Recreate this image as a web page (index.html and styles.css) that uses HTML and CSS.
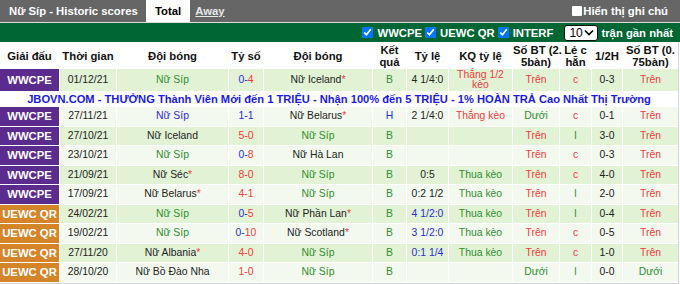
FILE: index.html
```html
<!DOCTYPE html>
<html>
<head>
<meta charset="utf-8">
<link rel="stylesheet" href="styles.css">
</head>
<body>
<div class="wrap">
  <div class="topbar">
    <div class="tabs">
      <span class="title">Nữ Síp - Historic scores</span>
      <span class="tab active">Total</span>
      <span class="tab link">Away</span>
    </div>
    <label class="note"><span class="box"></span>Hiển thị ghi chú</label>
  </div>
  <div class="filter">
    <label class="chk"><input type="checkbox" checked>WWCPE</label>
    <label class="chk"><input type="checkbox" checked>UEWC QR</label>
    <label class="chk"><input type="checkbox" checked>INTERF</label>
    <span class="sel"><span class="sel-val">10</span><svg class="chev" width="10" height="7" viewBox="0 0 10 7"><path d="M1 1.5 L5 5.5 L9 1.5" fill="none" stroke="#000" stroke-width="1.6"/></svg></span>
    <span class="recent">trận gần nhất</span>
  </div>
  <div class="frame">
  <table class="grid">
    <colgroup>
      <col class="w1"><col class="w2"><col class="w3"><col class="w4"><col class="w5"><col class="w6">
      <col class="w7"><col class="w8"><col class="w9"><col class="w10"><col class="w11"><col class="w12">
    </colgroup>
    <thead>
      <tr class="head">
        <th>Giải đấu</th><th>Thời gian</th><th>Đội bóng</th><th>Tỷ số</th><th>Đội bóng</th><th>Kết<br>quả</th>
        <th>Tỷ lệ</th><th>KQ tỷ lệ</th><th>Số BT (2.<br>5bàn)</th><th>Lẻ c<br>hẵn</th><th>1/2H</th><th>Số BT (0.<br>75bàn)</th>
      </tr>
    </thead>
    <tbody>
      <tr class="odd tall">
        <td class="lg purple">WWCPE</td><td>01/12/21</td><td class="g">Nữ Síp</td>
        <td><span class="b">0-</span><span class="r">4</span></td><td>Nữ Iceland<span class="r">*</span></td>
        <td class="g">B</td><td>4 1/4:0</td><td class="r">Thắng 1/2<br>kèo</td><td class="r">Trên</td><td class="r">c</td><td>0-3</td><td class="r">Trên</td>
      </tr>
      <tr class="ad"><td colspan="12">JBOVN.COM - THƯỞNG Thành Viên Mới đến 1 TRIỆU - Nhận 100% đến 5 TRIỆU - 1% HOÀN TRẢ Cao Nhất Thị Trường</td></tr>
      <tr class="even">
        <td class="lg purple">WWCPE</td><td>27/11/21</td><td class="b">Nữ Síp</td>
        <td class="b">1-1</td><td>Nữ Belarus<span class="r">*</span></td>
        <td class="b">H</td><td>2 1/4:0</td><td class="r">Thắng kèo</td><td class="g">Dưới</td><td class="r">c</td><td>0-1</td><td class="r">Trên</td>
      </tr>
      <tr class="odd">
        <td class="lg purple">WWCPE</td><td>27/10/21</td><td>Nữ Iceland</td>
        <td class="r">5-0</td><td class="g">Nữ Síp</td>
        <td class="g">B</td><td></td><td></td><td class="r">Trên</td><td class="g">l</td><td>3-0</td><td class="r">Trên</td>
      </tr>
      <tr class="even">
        <td class="lg purple">WWCPE</td><td>23/10/21</td><td class="g">Nữ Síp</td>
        <td><span class="b">0-</span><span class="r">8</span></td><td>Nữ Hà Lan</td>
        <td class="g">B</td><td></td><td></td><td class="r">Trên</td><td class="r">c</td><td>0-3</td><td class="r">Trên</td>
      </tr>
      <tr class="odd">
        <td class="lg purple">WWCPE</td><td>21/09/21</td><td>Nữ Séc<span class="r">*</span></td>
        <td class="r">8-0</td><td class="g">Nữ Síp</td>
        <td class="g">B</td><td>0:5</td><td class="g">Thua kèo</td><td class="r">Trên</td><td class="r">c</td><td>4-0</td><td class="r">Trên</td>
      </tr>
      <tr class="even">
        <td class="lg purple">WWCPE</td><td>17/09/21</td><td>Nữ Belarus<span class="r">*</span></td>
        <td class="r">4-1</td><td class="g">Nữ Síp</td>
        <td class="g">B</td><td>0:2 1/2</td><td class="g">Thua kèo</td><td class="r">Trên</td><td class="g">l</td><td>2-0</td><td class="r">Trên</td>
      </tr>
      <tr class="odd">
        <td class="lg orange">UEWC QR</td><td>24/02/21</td><td class="g">Nữ Síp</td>
        <td><span class="b">0-</span><span class="r">5</span></td><td>Nữ Phần Lan<span class="r">*</span></td>
        <td class="g">B</td><td class="b">4 1/2:0</td><td class="g">Thua kèo</td><td class="r">Trên</td><td class="g">l</td><td>0-4</td><td class="r">Trên</td>
      </tr>
      <tr class="even">
        <td class="lg orange">UEWC QR</td><td>19/02/21</td><td class="g">Nữ Síp</td>
        <td><span class="b">0-</span><span class="r">10</span></td><td>Nữ Scotland<span class="r">*</span></td>
        <td class="g">B</td><td class="b">3 1/2:0</td><td class="g">Thua kèo</td><td class="r">Trên</td><td class="r">c</td><td>0-5</td><td class="r">Trên</td>
      </tr>
      <tr class="odd">
        <td class="lg orange">UEWC QR</td><td>27/11/20</td><td>Nữ Albania<span class="r">*</span></td>
        <td class="r">4-0</td><td class="g">Nữ Síp</td>
        <td class="g">B</td><td class="b">0:1 1/4</td><td class="g">Thua kèo</td><td class="r">Trên</td><td class="r">c</td><td>1-0</td><td class="r">Trên</td>
      </tr>
      <tr class="even">
        <td class="lg orange">UEWC QR</td><td>28/10/20</td><td>Nữ Bồ Đào Nha</td>
        <td class="r">1-0</td><td class="g">Nữ Síp</td>
        <td class="g">B</td><td></td><td></td><td class="g">Dưới</td><td class="g">l</td><td>0-0</td><td class="g">Dưới</td>
      </tr>
    </tbody>
  </table>
  </div>
</div>
</body>
</html>
```
FILE: styles.css
```css
html, body {
  margin: 0;
  padding: 0;
  background: #fff;
}
.wrap {
  width: 680px;
  font-family: "Liberation Sans", Arial, sans-serif;
  color: #222;
}
.topbar {
  height: 22px;
  background: #666;
  display: flex;
  justify-content: space-between;
  align-items: stretch;
}
.tabs {
  display: flex;
  align-items: stretch;
}
.title {
  color: #fff;
  font-weight: bold;
  font-size: 11.3px;
  padding-left: 9px;
  width: 146px;
  box-sizing: border-box;
  white-space: nowrap;
  display: flex;
  align-items: center;
}
.tab {
  font-weight: bold;
  font-size: 11.3px;
  display: flex;
  align-items: center;
  justify-content: center;
  white-space: nowrap;
}
.tab.active {
  background: #fff;
  color: #000;
  width: 44px;
}
.tab.link {
  color: #e8e8e8;
  text-decoration: underline;
  width: 40px;
}
.note {
  display: flex;
  align-items: center;
  color: #fff;
  font-weight: bold;
  font-size: 11.3px;
  padding-right: 12px;
  white-space: nowrap;
}
.box {
  width: 10px;
  height: 10px;
  background: #fff;
  border-radius: 1px;
  margin-right: 1px;
}
.filter {
  height: 19px;
  border-top: 1px solid #ddd;
  background: #006633;
  display: flex;
  align-items: center;
  justify-content: flex-end;
  padding-right: 7px;
  color: #fff;
  font-weight: bold;
  font-size: 11.3px;
  white-space: nowrap;
}
.chk {
  display: flex;
  align-items: center;
  margin-left: 3px;
}
.chk input {
  width: 11px;
  height: 11px;
  margin: 0 4px 0 0;
}
.sel {
  margin-left: 11px;
  height: 16px;
  width: 34px;
  box-sizing: border-box;
  border: 1px solid #111;
  border-radius: 3px;
  background: #fff;
  color: #000;
  font-weight: normal;
  font-size: 12px;
  display: flex;
  align-items: center;
  justify-content: space-between;
  padding: 0 3px 0 4px;
}
.chev {
  display: block;
}
.recent {
  margin-left: 3px;
}
.frame {
  width: 678px;
  overflow: hidden;
  border-right: 1px solid #d4d4d4;
  border-bottom: 1px solid #d4d4d4;
}
.grid {
  table-layout: fixed;
  border-collapse: separate;
  border-spacing: 1px;
  margin-left: -1px;
  width: 680px;
  font-size: 10.4px;
  text-align: center;
  background: #fff;
}
.w1 { width: 59px; }
.w2 { width: 56px; }
.w3 { width: 111px; }
.w4 { width: 34px; }
.w5 { width: 108px; }
.w6 { width: 33px; }
.w7 { width: 41px; }
.w8 { width: 63px; }
.w9 { width: 46px; }
.w10 { width: 31px; }
.w11 { width: 30px; }
.w12 { width: 55px; }
.grid th {
  font-weight: bold;
  font-size: 11.3px;
  line-height: 12px;
  height: 25px;
  padding: 0;
  color: #111;
  background: #fff;
  vertical-align: middle;
  white-space: nowrap;
}
.grid td {
  padding: 0;
  height: 18.5px;
  line-height: 12px;
  vertical-align: middle;
  color: #222;
  white-space: nowrap;
}
.grid tr.tall td {
  height: 22px;
  line-height: 10.5px;
}
.odd td { background: #e2f2d5; }
.even td { background: #f3f9ee; }
.grid td.lg {
  color: #fff;
  font-weight: bold;
  font-size: 11.3px;
}
.purple { background: #5b2c8e !important; }
.orange { background: #d4852a !important; }
.ad td {
  background: #fff;
  color: #1a1ae6;
  font-weight: bold;
  font-size: 11.15px;
  height: 14px;
  line-height: 14px;
}
.grid .g { color: #2f8f2f; }
.grid .r { color: #f23b3b; }
.grid .b { color: #2b2be0; }
```
